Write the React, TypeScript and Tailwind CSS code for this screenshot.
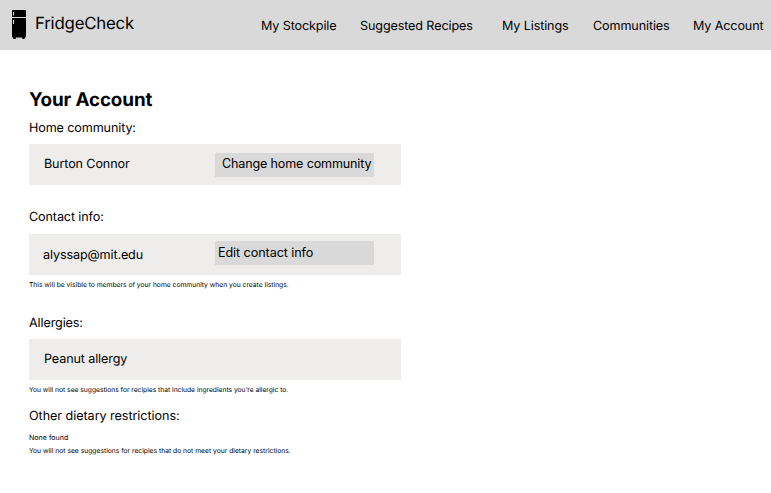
const nav = [
  { label: "My Stockpile", w: "w-[99px]" },
  { label: "Suggested Recipes", w: "w-[142px]" },
  { label: "My Listings", w: "w-[91px]" },
  { label: "Communities", w: "w-[100px]" },
  { label: "My Account", w: "w-[78px]" },
];

function Fridge() {
  return (
    <svg className="mt-[10px] ml-[11px] h-[29px] w-[16px] shrink-0" viewBox="0 0 16 29">
      <path d="M2 0h12q1 0 1 1V7H1V1Q1 0 2 0ZM1 8h14v18q0 1.500-1 1.500L13.500 29h-2L11 27.500H5L4.500 29h-2L2 27.500q-1 0-1-1.500Z" fill="#000" />
      <path d="M2.500 2v3.500M2.500 10v4" stroke="#d9d9d9" />
    </svg>
  );
}

export default function App() {
  return (
    <div className="h-[493px] w-[771px] overflow-hidden bg-white font-['Inter',sans-serif] text-[12.600px] leading-4 tracking-[-0.120px] whitespace-nowrap text-black antialiased [text-rendering:geometricPrecision]">
      <header className="flex h-[49.500px] bg-[#d9d9d9]">
        <Fridge />
        <div className="mt-[14px] ml-[8px] w-[226px] text-[16.800px] leading-5 tracking-[-0.2px]">FridgeCheck</div>
        <nav className="mt-[19px] flex">
          {nav.map((n) => (
            <div key={n.label} className={`${n.w} shrink-0`}>{n.label}</div>
          ))}
        </nav>
      </header>
      <main className="ml-[29px] w-[372px] pt-[38.500px]">
        <h1 className="h-[32px] text-[18.800px] leading-6 font-bold tracking-[-0.1px]">Your Account</h1>
        <div className="h-[24px] pt-px">Home community:</div>
        <div className="flex h-[41px] bg-[#eeedeb]">
          <div className="mt-[13px] w-[186px] pl-[15px]">Burton Connor</div>
          <button className="mt-[9px] flex h-[24px] w-[159px] bg-[#d9d9d9] pt-[3px] pl-[7px] text-left tracking-[-0.170px]">Change home community</button>
        </div>
        <div className="mt-[24px] h-[25px] pt-px">Contact info:</div>
        <div className="flex h-[41px] bg-[#eeedeb]">
          <div className="mt-[14px] w-[186px] pl-[14px]">alyssap@mit.edu</div>
          <button className="mt-[7px] h-[24px] w-[159px] bg-[#d9d9d9] pl-[3px] text-left tracking-[-0.080px]">Edit contact info</button>
        </div>
        <div className="mt-[6px] h-[34px] text-[6.720px] leading-2 tracking-normal">This will be visible to members of your home community when you create listings.</div>
        <div className="h-[24px] pt-px">Allergies:</div>
        <div className="h-[41px] bg-[#eeedeb] pt-[13px] pl-[15px]">Peanut allergy</div>
        <div className="mt-[6px] h-[22px] text-[6.700px] leading-2 tracking-normal">You will not see suggestions for recipies that include ingredients you’re allergic to.</div>
        <div className="h-[25px] pt-px tracking-[-0.050px]">Other dietary restrictions:</div>
        <div className="h-[14px] pt-px text-[7.100px] leading-2 tracking-normal">None found</div>
        <div className="text-[6.740px] leading-2 tracking-normal">You will not see suggestions for recipies that do not meet your dietary restrictions.</div>
      </main>
    </div>
  );
}
